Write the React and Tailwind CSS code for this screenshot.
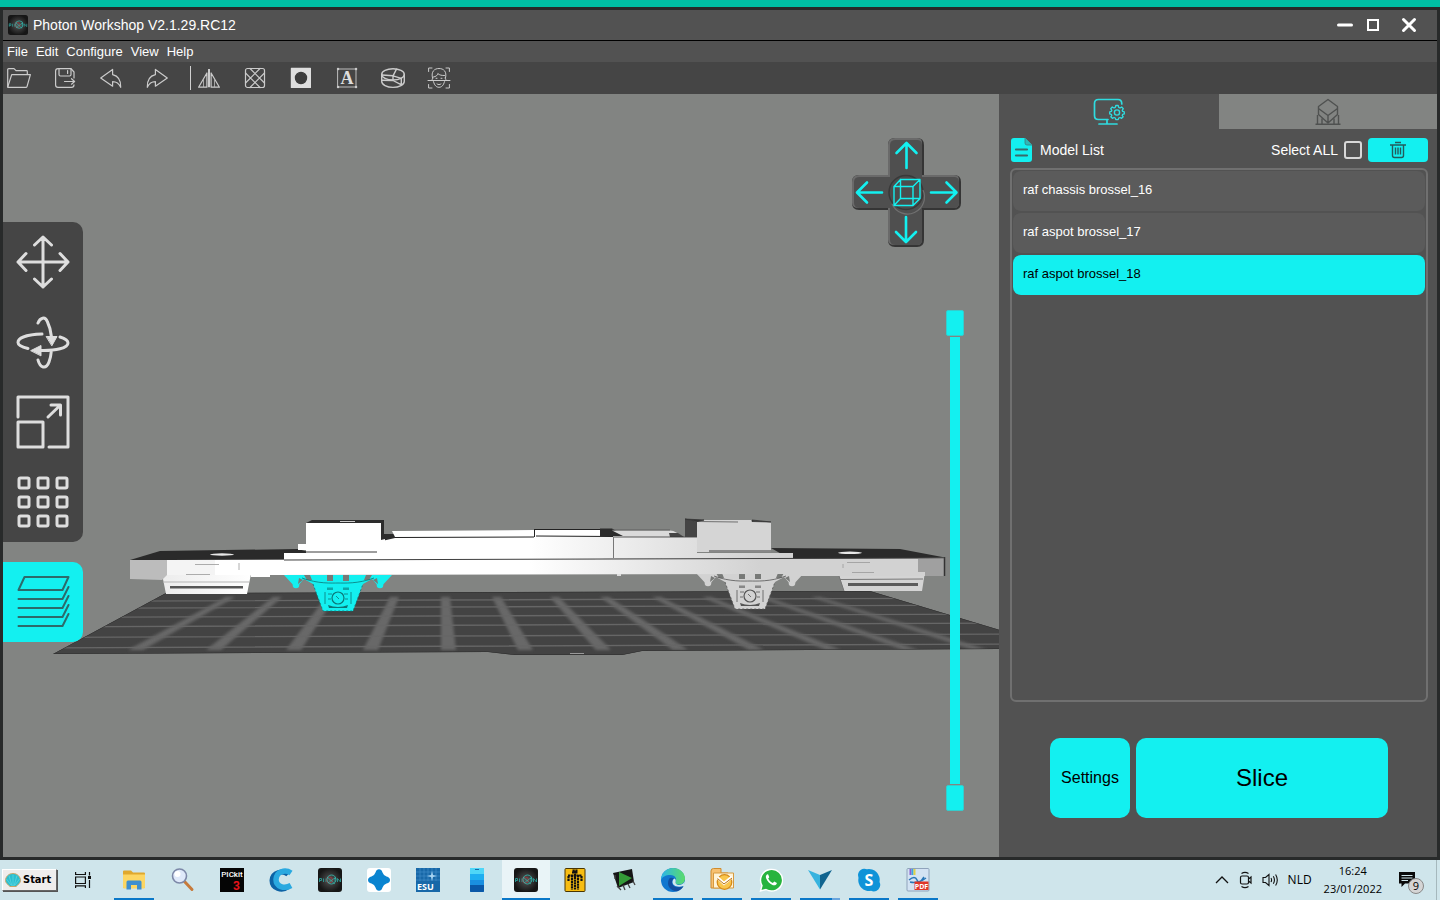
import { useState } from "react";

const CYAN = "#13f0f0";

const ToolSvg = ({ children }) => (
  <svg
    viewBox="0 0 24 24"
    className="w-6 h-6"
    fill="none"
    stroke="#cbcbcb"
    strokeWidth="1.2"
    strokeLinejoin="round"
    strokeLinecap="round"
  >
    {children}
  </svg>
);

const fileTools = [
  {
    label: "Open",
    icon: (
      <ToolSvg>
        <path d="M.7 21V3.6Q.7 2.6 1.7 2.6H7L9 4.6H19.5Q20.3 4.6 20.3 5.4V8" />
        <path d="M.7 21 4.7 8.6H23.4L20 20.6Q19.7 21.4 19 21.4H1Z" />
      </ToolSvg>
    ),
  },
  {
    label: "Save",
    icon: (
      <ToolSvg>
        <path d="M21 12V6L18 2.6H5Q2.6 2.6 2.6 5V19Q2.6 21.4 5 21.4H18.5Q21 21.4 21 18.8" />
        <path d="M6 2.8V8.5Q6 10 7.5 10H16.5Q18 10 18 8.5V2.8M14.6 4.5V7.5M11.5 15.5H21.5M18.5 12.7 21.6 15.5 18.5 18.2" />
      </ToolSvg>
    ),
  },
  {
    label: "Undo",
    icon: (
      <ToolSvg>
        <path d="M1.7 12 13.6 3.4V8.6C18.8 9.8 22 14.5 21.7 21.3 20 17.4 17.5 15.6 13.6 15.6V20.2Z" />
      </ToolSvg>
    ),
  },
  {
    label: "Redo",
    icon: (
      <ToolSvg>
        <path d="M22.3 12 10.4 3.4V8.6C5.2 9.8 2 14.5 2.3 21.3 4 17.4 6.5 15.6 10.4 15.6V20.2Z" />
      </ToolSvg>
    ),
  },
];

const modelTools = [
  {
    label: "Mirror",
    icon: (
      <ToolSvg>
        <path d="M1.6 21.2 9.9 7V21.2ZM22.4 21.2 14.1 7V21.2Z" />
        <path d="M6.5 20.5V14M17.5 20.5V14" strokeWidth=".7" />
        <path d="M12 3V21.2" strokeWidth="2" strokeLinecap="butt" />
      </ToolSvg>
    ),
  },
  {
    label: "Hollow",
    icon: (
      <ToolSvg>
        <rect x="2.5" y="2.5" width="19" height="19" rx="2" />
        <path d="M7 2.5 21.5 17M2.5 7 17 21.5M17 2.5 2.5 17M21.5 7 7 21.5" />
      </ToolSvg>
    ),
  },
  {
    label: "Punch",
    icon: (
      <ToolSvg>
        <rect x="2.4" y="2.4" width="19" height="19" fill="#dedede" stroke="#dedede" />
        <circle cx="12" cy="12" r="5.6" fill="#3c3c3c" stroke="#3c3c3c" />
      </ToolSvg>
    ),
  },
  {
    label: "Text",
    icon: (
      <ToolSvg>
        <rect x="3" y="3" width="18" height="18" strokeWidth=".9" />
        <path d="M3 3h.1M21 3h.1M3 21h.1M21 21h.1" strokeWidth="2.4" />
        <text
          x="12"
          y="18"
          textAnchor="middle"
          fill="#dedede"
          stroke="none"
          fontSize="18"
          fontWeight="bold"
          fontFamily="Liberation Serif, serif"
        >
          A
        </text>
      </ToolSvg>
    ),
  },
  {
    label: "Split",
    icon: (
      <ToolSvg>
        <g strokeWidth="1.4">
          <ellipse cx="12" cy="8.4" rx="11.3" ry="5.6" />
          <path d="M.7 8.4V15.2C.7 18.7 5.8 21.4 12 21.4S23.3 18.7 23.3 15.2V8.4" />
          <path d="M.8 9 12 9.8 15.5 3.2M12 9.8 20.3 12.3V18.8M12 9.800V14.500M.8 14.200 12 14.500 20 18.600" />
        </g>
      </ToolSvg>
    ),
  },
  {
    label: "Lithophane",
    icon: (
      <ToolSvg>
        <g strokeWidth="1">
          <path d="M1.6 5.5V2H5M19 2H22.4V5.5M22.4 18.5V22H19M5 22H1.6V18.5" />
          <path d="M1 14.5H23" />
          <path d="M5.5 12C3.8 5.5 7.5 2.5 12 2.5S20.2 5.5 18.5 12M6 12C4.5 12 5 15 6.5 15.5 7.5 19.5 9.5 21.3 12 21.3S16.5 19.5 17.5 15.5C19 15 19.5 12 18 12M6.5 11C9 10.5 10.5 9.5 10.8 7.5 12.5 9.3 15 9.5 17.5 9.5M9 12.3H10M14 12.3H15M10 18C11 18.8 13 18.8 14 18" />
        </g>
      </ToolSvg>
    ),
  },
];

const cells = [8, 27, 46];

const sideTools = [
  {
    label: "Move",
    icon: (
      <path d="M27 2V52M2 27H52M18.5 10 27 2 35.5 10M18.5 44 27 52 35.5 44M10 18.5 2 27 10 35.5M44 18.5 52 27 44 35.5" />
    ),
  },
  {
    label: "Rotate",
    icon: (
      <>
        <path d="M22 8C24 3 29 .5 31.5 7 34 12 35 17 35.5 22M22 45C24 53 30 55 33 47 34.5 43 35 40 35.2 37" />
        <path d="M26 19C12 19.5 2 22.5 2 27.5 2 30 6 32 12 33.5M44 22C49 23.5 52 25.5 52 28 52 33 40 36 24 35.5" />
        <path d="M30.5 21.5H41L36 30.5ZM15 35.5 25 30.5V40.5Z" fill="#dedede" strokeWidth="1" />
      </>
    ),
  },
  {
    label: "Scale",
    icon: (
      <>
        <path d="M2 22V2H52V52H33" />
        <path d="M2 27H27V52H2ZM32 22 44 10.5M35 10H44.5V20" />
      </>
    ),
  },
  {
    label: "Array",
    icon: cells.map((cy) =>
      cells.map((cx) => (
        <rect key={`${cx}-${cy}`} x={cx - 5} y={cy - 5} width="10" height="10" rx="1.5" />
      ))
    ),
  },
];

// x of each grid stripe at the back and at the front of the plate
const stripes = [
  [230, 135],
  [277, 213],
  [330, 293],
  [394, 370],
  [445, 448],
  [496, 525],
  [554, 603],
  [604, 680],
  [656, 756],
  [706, 833],
  [762, 910],
  [815, 980],
];

const Bogie = ({ x, y, color, dark }) => (
  <g transform={`translate(${x} ${y})`}>
    <path d="M-54 0H54L42 13 34 4 25 9 15 36H-15L-25 9-34 4-42 13Z" fill={color} />
    <circle cx="-42" cy="10" r="3.3" fill={color} />
    <circle cx="42" cy="10" r="3.3" fill={color} />
    <path
      d="M-11 0H-5V6H-11ZM5 0H11V6H5ZM-34 0H-28L-26 5H-31ZM28 0H34L31 5H26ZM-39 3-35 5-40 9ZM39 3 35 5 40 9Z"
      fill="#777977"
    />
    <path
      d="M-36 3C-20 9-6 8 0 8S20 9 36 3M-13 17V29M13 17V29M-10 19H-6M6 19H10M-10 24H-7M7 24H10"
      stroke={dark}
      strokeWidth=".8"
      fill="none"
    />
    <path d="M-11 12.500H-5V15H-11ZM5 12.500H11V15H5Z" fill={dark} opacity=".6" />
    <circle cx="0" cy="23" r="6" stroke={dark} strokeWidth="1.2" fill="none" />
    <path d="M-2 21 1 24" stroke={dark} strokeWidth=".8" />
    <path d="M-10 30Q0 34 10 30L9 33H-9Z" fill={dark} />
    <path d="M-25 9-15 36H15L25 9" stroke={dark} strokeWidth=".8" strokeDasharray="2 2" fill="none" />
  </g>
);

const Scene = () => (
  <svg
    viewBox="3 94 996 763"
    preserveAspectRatio="xMidYMid slice"
    className="absolute inset-0 w-full h-full"
    aria-hidden="true"
  >
    <defs>
      <linearGradient id="beam" gradientUnits="userSpaceOnUse" x1="530" y1="0" x2="760" y2="0">
        <stop offset="0" stopColor="#ffffff" />
        <stop offset="1" stopColor="#d2d2d2" />
      </linearGradient>
      <linearGradient id="bumper" x1="0" y1="0" x2="1" y2="0">
        <stop offset="0" stopColor="#ececec" />
        <stop offset="1" stopColor="#ffffff" />
      </linearGradient>
      <clipPath id="bed">
        <path d="M53 654 166 593 870 591 1010 633V649L642 651 622 655H515L488 652Z" />
      </clipPath>
      <filter id="soft" x="-20%" y="-20%" width="140%" height="140%">
        <feGaussianBlur stdDeviation="1.6" />
      </filter>
    </defs>

    {/* build plate */}
    <g clipPath="url(#bed)">
      <rect x="40" y="588" width="980" height="72" fill="#434343" />
      <g filter="url(#soft)">
        {stripes.map(([top, bottom]) => (
          <path
            key={top}
            d={`M${top - 4} 597H${top + 5}L${bottom + 8} 650H${bottom - 7}Z`}
            fill="#686868"
          />
        ))}
      </g>
      <path
        d="M0 601.5 1010 598M0 608.5 1010 605M0 617.5 1010 614M0 627 1010 623M0 637.5 1010 634M0 648 1010 644"
        stroke="#666"
        strokeWidth="1.3"
      />
      <path d="M53 654 166 593 870 591 1010 633V649L642 651 622 655H515L488 652Z" fill="none" stroke="#2d2d2d" />
      <path d="M570 653.5h14" stroke="#999" />
    </g>

    {/* under-frame */}
    <Bogie x={338} y={575} color={CYAN} dark="#0b7777" />
    <Bogie x={750} y={573} color="#d2d2d2" dark="#555" />
    <path d="M162 574H251L247 594H166Z" fill="url(#bumper)" />
    <path d="M170 586H243V588.5H170Z" fill="#555" />
    <path d="M163 582H249" stroke="#b5b5b5" />
    <path d="M838 572H925L922 591H844Z" fill="#d4d4d4" />
    <path d="M848 583H918V586H848Z" fill="#5c5c5c" />
    <path d="M840 579.5 923 579M838 573 844 591" stroke="#777" />

    {/* deck */}
    <path d="M130 560 160 551 298 549 312 553 284 560.5Z" fill="#2a2a2a" />
    <ellipse cx="222" cy="554.5" rx="12" ry="1.2" fill="#e8e8e8" />
    <path d="M771 548 900 549 945 557.5 792 560Z" fill="#2a2a2a" />
    <ellipse cx="850" cy="552.8" rx="12" ry="1.2" fill="#e8e8e8" />
    <path d="M130 560H167V575L162 580 130 579Z" fill="#bcbcbc" />
    <path d="M167 560 945 558V574L925 576H800V574L270 575V577H251V575H167Z" fill="url(#beam)" />
    <path d="M167 560H215V575H167Z" fill="#f4f4f4" />
    <path d="M918 559H944V576H925V572H918Z" fill="#a0a0a0" />
    <path d="M944.5 557V576" stroke="#333" strokeWidth="1.5" />
    <path d="M195 564.5H219M186 574.5H210M239 563V570M847 562.5H870M852 572.5H874M843 564V568" stroke="#999" strokeWidth=".8" />
    <path d="M617 574H621V576H617Z" fill="#ddd" />
    <path d="M284 553H793V560H284Z" fill="url(#beam)" />
    <path d="M377 553V541L395 536H613L697 537V553Z" fill="url(#beam)" />

    {/* body */}
    <path d="M306 523 312 520H384V534H395V538L382 541H306Z" fill="#2c2c2c" />
    <path d="M298 544H306V523H381V540L385 539V553H306V550H298Z" fill="#fff" />
    <path d="M340 521.5H355" stroke="#ccc" />
    <path d="M392 531 534 530H600V536L395 537Z" fill="#fff" />
    <path d="M395 537.5 534 537M534 529.5H600M534.5 530V537M536 536 613 536.5" stroke="#222" />
    <path d="M600 528.5H612L625 536H600Z" fill="#2c2c2c" />
    <path d="M612 530.5H670Q677 531 681 537H625Z" fill="#dadada" />
    <path d="M612 530H670" stroke="#555" strokeWidth=".8" />
    <path d="M669 533H678L684 537H670Z" fill="#444" />
    <path d="M613 537H697" stroke="#333" strokeWidth=".8" />
    <path d="M613.5 537V558" stroke="#777" />
    <path d="M685 519 698 522V537H685Z" fill="#444" />
    <path d="M697 521.5 705 520H752L771 522V552H697Z" fill="#d5d5d5" />
    <path d="M697 521.5 738 522" stroke="#555" strokeWidth=".8" />
    <path d="M685 519 697 521.5 704 520ZM752 520 771 522 752 521.5Z" fill="#333" stroke="#333" strokeWidth=".8" />
    <path d="M709 551H771M284 560 606 559 945 558M306 552H377" stroke="#3d3d3d" strokeWidth="1" />
  </svg>
);

const ViewButton = ({ label, d, className }) => (
  <button aria-label={label} className={className}>
    <svg
      viewBox="0 0 36 36"
      className="w-9 h-9"
      stroke={CYAN}
      strokeWidth="2.6"
      strokeLinecap="round"
      strokeLinejoin="round"
      fill="none"
    >
      {d}
    </svg>
  </button>
);

const ViewCross = () => (
  <div className="relative w-[110px] h-[110px]">
    <svg viewBox="0 0 110 110" className="absolute inset-0 w-full h-full" aria-hidden="true">
      <path
        d="M43 0H65Q72 0 72 7V37H102Q109 37 109 44V65Q109 72 102 72H72V102Q72 109 65 109H43Q36 109 36 102V72H7Q0 72 0 65V44Q0 37 7 37H36V7Q36 0 43 0Z"
        fill="#353535"
      />
      <path
        d="M43 0H65Q70 0 70 5V37H102Q107 37 107 42V65Q107 70 102 70H70V102Q70 107 65 107H43Q36 107 36 102V70H7Q0 70 0 65V44Q0 37 7 37H36V7Q36 0 43 0Z"
        fill="#6a6a6a"
      />
      <path
        d="M44 2H65Q70 2 70 7V39H102Q107 39 107 44V65Q107 70 102 70H70V102Q70 107 65 107H44Q38 107 38 102V70H8Q2 70 2 65V44Q2 39 8 39H38V7Q38 2 44 2Z"
        fill="#4f4f4f"
      />
      <circle cx="54" cy="54.5" r="17" fill="#4c4c4c" stroke="#393939" strokeWidth="1.5" />
      <path d="M40 66A17 17 0 0 0 71 52" stroke="#707070" strokeWidth="1.2" fill="none" />
    </svg>
    <div className="relative w-[108px] h-[108px] grid grid-cols-3 grid-rows-3">
      <ViewButton label="Top view" className="col-start-2" d={<path d="M18.500 30V6M8.500 15 18.500 5 28.500 15" />} />
      <ViewButton label="Left view" className="col-start-1 row-start-2" d={<path d="M30 18.500H6M15 8.500 5 18.500 15 28.500" />} />
      <ViewButton
        label="Perspective"
        className="col-start-2 row-start-2"
        d={
          <path
            d="M6 12.500H25V31.500H6ZM12.500 5.500H32V24.500H12.500ZM6 12.500 12.500 5.500M25 12.500 32 5.500M25 31.500 32 24.500M6 31.500 12.500 24.500"
            strokeWidth="1.4"
          />
        }
      />
      <ViewButton label="Right view" className="col-start-3 row-start-2" d={<path d="M7 18.500H32M22.500 8.500 32.500 18.500 22.500 28.500" />} />
      <ViewButton label="Bottom view" className="col-start-2 row-start-3" d={<path d="M18 7V31M8 22 18 32 28 22" />} />
    </div>
  </div>
);

const rangeClass =
  "absolute inset-0 w-[18px] h-full m-0 appearance-none bg-transparent pointer-events-none [writing-mode:vertical-lr] [direction:rtl] [&::-webkit-slider-thumb]:appearance-none [&::-webkit-slider-thumb]:pointer-events-auto [&::-webkit-slider-thumb]:w-[18px] [&::-webkit-slider-thumb]:h-[26px] [&::-webkit-slider-thumb]:rounded-[2px] [&::-webkit-slider-thumb]:border [&::-webkit-slider-thumb]:border-[#35cccc] [&::-webkit-slider-thumb]:bg-[#13f0f0]";

const LayerSlider = () => {
  const [top, setTop] = useState(100);
  const [bottom, setBottom] = useState(0);

  return (
    <div className="relative w-[18px] h-[501px] flex justify-center py-[27px]">
      <div className="w-[10px] bg-[#13f0f0]"></div>
      <input
        type="range"
        aria-label="Top layer"
        className={rangeClass}
        value={top}
        onChange={(e) => setTop(Number(e.target.value))}
      />
      <input
        type="range"
        aria-label="Bottom layer"
        className={rangeClass}
        value={bottom}
        onChange={(e) => setBottom(Number(e.target.value))}
      />
    </div>
  );
};

const PhotonIcon = ({ size }) => (
  <svg viewBox="0 0 24 24" className={size}>
    <defs>
      <radialGradient id="photon">
        <stop offset="0" stopColor="#565656" />
        <stop offset="1" stopColor="#161616" />
      </radialGradient>
    </defs>
    <rect width="24" height="24" rx="3" fill="url(#photon)" />
    <path
      d="M1.5 14V10.5H3.5V12.500H1.500M5.500 10.500V14M8 10.500V14M16 10.500H18M17 10.500V14M19.500 14V10.500L22.500 14V10.500"
      stroke="#2a9c96"
      strokeWidth=".9"
      fill="none"
    />
    <circle cx="11.5" cy="12" r="3" stroke="#b0333a" strokeWidth=".8" fill="none" />
    <ellipse cx="13.5" cy="11.5" rx="4.5" ry="4.500" stroke="#35bfb4" strokeWidth=".8" fill="none" />
    <path d="M9 9 17 16M10 15 18 9" stroke="#35bfb4" strokeWidth=".6" />
  </svg>
);

const Icon24 = ({ children }) => (
  <svg viewBox="0 0 24 24" className="w-6 h-6">
    {children}
  </svg>
);

const taskbarApps = [
  {
    name: "File Explorer",
    running: true,
    icon: (
      <Icon24>
        <path d="M1 3.5Q1 2.5 2 2.5H9L11 4.5H22Q23 4.5 23 5.5V20H1Z" fill="#e0a82e" />
        <path d="M1 6.5H23V19.5Q23 20.5 22 20.5H2Q1 20.5 1 19.5Z" fill="#fdd663" />
        <path d="M4.5 21.5V14Q4.5 12.5 6 12.5H18Q19.5 12.5 19.5 14V21.5H15V17H9V21.5Z" fill="#3f8fd0" />
      </Icon24>
    ),
  },
  {
    name: "Search",
    icon: (
      <Icon24>
        <path d="M13 13 21 21.5" stroke="#c77a3b" strokeWidth="3" strokeLinecap="round" />
        <circle cx="8.5" cy="8" r="7" fill="#dfe9fa" stroke="#7d88a8" strokeWidth="1.6" />
        <circle cx="6.5" cy="6" r="3" fill="#fff" />
      </Icon24>
    ),
  },
  {
    name: "PICkit 3",
    icon: (
      <Icon24>
        <rect width="24" height="24" fill="#050505" />
        <text x="12" y="8.5" fill="#fff" fontSize="8" fontFamily="Roboto, sans-serif" fontWeight="500" textAnchor="middle">
          PICkit
        </text>
        <text x="16.5" y="22" fill="#e8131b" fontSize="12" fontFamily="Roboto, sans-serif" fontWeight="bold" textAnchor="middle">
          3
        </text>
      </Icon24>
    ),
  },
  {
    name: "Cura",
    icon: (
      <Icon24>
        <path d="M19 6.5C14 2 3.500 4 3 12.5 3 20.500 13 23.500 18.500 19" stroke="#0d63a5" strokeWidth="5" fill="none" />
        <path d="M22 5C16 1 7.500 3.500 7 11.500 7 18.500 15 21.500 22 17.500" stroke="#2aa9e0" strokeWidth="5.500" fill="none" />
      </Icon24>
    ),
  },
  { name: "Photon Workshop", icon: <PhotonIcon size="w-6 h-6" /> },
  {
    name: "Sensor",
    icon: (
      <Icon24>
        <rect width="24" height="24" rx="3" fill="#fff" />
        <path
          d="M12 1.200Q14.500 1.200 15.500 4.500 16.500 7.500 19.500 8.500 23 9.500 23 12T19.500 15.500Q16.500 16.500 15.500 19.500 14.500 22.800 12 22.800T8.500 19.500Q7.500 16.500 4.500 15.500 1 14.500 1 12T4.500 8.500Q7.500 7.500 8.500 4.500 9.500 1.200 12 1.200Z"
          fill="#0a84d0"
        />
      </Icon24>
    ),
  },
  {
    name: "ESU",
    icon: (
      <Icon24>
        <rect width="24" height="24" fill="#1868a8" />
        <path d="M0 4H24M0 8H24M0 12H24M4 0V13M8 0V13M12 0V13M16 0V13M20 0V13" stroke="#3f8cc8" strokeWidth=".7" />
        <path d="M16 3 17 7 21 8 17 9 16 13 15 9 11 8 15 7Z" fill="#a9d4f2" />
        <text x="1" y="22" fill="#fff" fontSize="9" fontWeight="bold" fontFamily="Open Sans, sans-serif">
          ESU
        </text>
      </Icon24>
    ),
  },
  {
    name: "Your Phone",
    icon: (
      <Icon24>
        <rect x="5" width="14" height="24" rx="1" fill="#1a8fe0" />
        <rect x="5" width="14" height="6" fill="#4fd6f7" />
        <rect x="5" y="6" width="14" height="6" fill="#1eaef0" />
        <path d="M5 17H19V23Q19 24 18 24H6Q5 24 5 23Z" fill="#0a58a8" />
        <path d="M10 1.5H14" stroke="#1669a8" />
      </Icon24>
    ),
  },
  { name: "Photon Workshop V2", running: true, active: true, icon: <PhotonIcon size="w-6 h-6" /> },
  {
    name: "Crowd",
    icon: (
      <Icon24>
        <rect x="2" y=".5" width="20" height="23" rx="1" fill="#f7bd12" stroke="#4a3500" />
        <path
          d="M9 4.5H15M9.5 2.5H14.5M5 7.5H19M5.5 8V13M18.5 8V13M9 7V21.5M12 3V21.5M15 7V21.5"
          stroke="#111"
          strokeWidth="2.2"
          strokeDasharray="2.300 .5"
        />
      </Icon24>
    ),
  },
  {
    name: "Circuit",
    icon: (
      <Icon24>
        <path d="M1 5 20 1 22 14 6 20Z" fill="#161616" />
        <path d="M7 4 20 10 7 18Z" fill="#349a37" />
        <path d="M3 7V11M5 18 9 22M11 17 13 22M16 16 18 20M21 13 23 17" stroke="#444" strokeWidth="1.3" />
      </Icon24>
    ),
  },
  {
    name: "Edge",
    running: true,
    icon: (
      <Icon24>
        <defs>
          <linearGradient id="edgeTop" x1="0" y1="0" x2="1" y2="0">
            <stop offset="0" stopColor="#2bb5ea" />
            <stop offset="1" stopColor="#5bdc6a" />
          </linearGradient>
        </defs>
        <circle cx="12" cy="12" r="12" fill="#1177cf" />
        <path d="M0 12C0 5 5.5 0 12 0S24 5 24 10.5 19 17 16 16.5 14.5 14 15 12.5 14.5 7 9.5 7 1 9 0 12Z" fill="url(#edgeTop)" />
        <path d="M8 11C5 17 9 23 16 23.3 19 22.5 21.5 20.5 22.5 18 16 21 11 18.5 11 14 11 12 12 11 13 10.5 11.5 9.5 9 9.5 8 11Z" fill="#124fa0" />
        <path d="M13.5 10.5C15.5 11.5 14.5 13.5 14.5 15 15.5 18 22 18 24 13L23.5 17.5 22.5 18C16 20 11.5 17.5 11.5 14 11.5 12 12.5 11 13.5 10.5Z" fill="#d2e8ee" />
      </Icon24>
    ),
  },
  {
    name: "Outlook",
    running: true,
    icon: (
      <Icon24>
        <path d="M1 3Q1 .5 3.5 .5H11V5H18V20H1Z" fill="#f7c172" stroke="#cf8b2d" />
        <path d="M3.5 5H23.5V20H3.5Z" fill="#fff3d6" stroke="#d79a3f" />
        <circle cx="14.500" cy="14" r="7.3" fill="#f9c64d" stroke="#d58a18" strokeWidth="1.3" />
        <path d="M7.500 9.500 14 15.500 22 9" stroke="#fff" strokeWidth="3" fill="none" />
        <path d="M7.500 10.500 14 16 22 10" stroke="#b86f10" strokeWidth="1" fill="none" />
      </Icon24>
    ),
  },
  {
    name: "WhatsApp",
    running: true,
    icon: (
      <Icon24>
        <path d="M1.5 23 3 17.5A11 10.8 0 1 1 7 21.5Z" fill="#27b43e" stroke="#fff" strokeWidth="1.4" />
        <path d="M8.3 6.3C7 7 6.5 8.6 7.1 10.3 8.4 13.6 10.8 16 14 17.2 15.9 17.8 17.6 16.8 17.9 15L15.2 13.5 13.9 15C11.7 14.1 10.2 12.5 9.2 10.5L10.3 9.2 9.2 6.5Z" fill="#fff" />
      </Icon24>
    ),
  },
  {
    name: "Vectorworks",
    running: true,
    partial: true,
    icon: (
      <Icon24>
        <path d="M0 2 12 7V21.5Z" fill="#36b3df" />
        <path d="M24 2 12 7V21.5Z" fill="#11648f" />
      </Icon24>
    ),
  },
  {
    name: "Skype",
    running: true,
    icon: (
      <Icon24>
        <path d="M1 7A6.5 6.5 0 0 1 10 1.2 10.8 10.8 0 0 1 22.5 14 6.5 6.5 0 0 1 14 22.8 10.8 10.8 0 0 1 1.5 10Z" fill="#0f93d8" />
        <text x="12" y="17.5" textAnchor="middle" fill="#fff" fontSize="16" fontWeight="bold" fontFamily="Open Sans, sans-serif">
          S
        </text>
      </Icon24>
    ),
  },
  {
    name: "PDF Creator",
    running: true,
    icon: (
      <Icon24>
        <rect x="1" y=".5" width="22" height="22.5" rx="1" fill="#d3e3f3" stroke="#8fa3bb" />
        <path d="M4.5 1V7" stroke="#8b5fd0" strokeWidth="2" />
        <path d="M6.5 1V7" stroke="#3aa7e0" strokeWidth="2" />
        <path d="M8.5 1V7" stroke="#e0d048" strokeWidth="2" />
        <path d="M3 12Q9 7 11 12T18 9M4 14Q12 16 20 10" stroke="#2876b8" strokeWidth="1.5" fill="none" />
        <rect x="8.5" y="13.5" width="14" height="8.5" fill="#e03528" />
        <text x="15.5" y="20.5" textAnchor="middle" fill="#fff" fontSize="7" fontWeight="bold" fontFamily="Open Sans, sans-serif">
          PDF
        </text>
      </Icon24>
    ),
  },
];

const TaskbarApp = ({ app }) => (
  <button
    aria-label={app.name}
    className={`relative w-12 h-10 flex items-center justify-center ${app.active ? "bg-[#e9f4f7]" : ""}`}
  >
    {app.icon}
    {app.running && (
      <span
        className={`absolute bottom-0 h-[2px] flex bg-[#0b78c8] ${
          app.active ? "inset-x-0" : "inset-x-1"
        }`}
      >
        {app.partial && <span className="ml-auto w-2 bg-[#6aa5dd]"></span>}
      </span>
    )}
  </button>
);

const Taskbar = () => (
  <footer className="h-10 flex items-center bg-[#cfe5eb] text-black font-['Open_Sans',sans-serif]">
    <button className="ml-[2px] w-[55px] h-[22px] px-[2px] flex items-center gap-[2px] bg-[#efedec] border border-t-white border-l-white border-r-[#666] border-b-[#666] shadow-[1px_1px_0_#555] text-[11px] font-bold font-['DejaVu_Sans_Condensed','DejaVu_Sans',sans-serif]">
      <svg viewBox="0 0 16 16" className="w-4 h-4 shrink-0">
        <path d="M8 1.5C12.5 1.5 15.5 5 15.5 8.5 15.5 11 13 12.5 11 14.5H5C3 12.5 .5 11 .5 8.5 .5 5 3.5 1.5 8 1.5Z" fill="#29bfd0" stroke="#c9a56a" />
        <path d="M8 14V2.5M7 14 4 3.5M9 14 12 3.5M6 13 1.5 7M10 13 14.5 7" stroke="#6fdbe3" strokeWidth=".6" />
      </svg>
      Start
    </button>
    <button aria-label="Task view" className="ml-[2px] mr-[3px] w-12 h-10 flex items-center justify-center">
      <svg viewBox="0 0 16 16" className="w-4 h-4" stroke="#111" strokeWidth="1.2" fill="none">
        <path d="M.6 0V2.5H10.4V0M.6 5H10.4V11.5H.6ZM.6 16V13.8H10.4V16M14.5 0V3.5M14.5 8V16" />
        <path d="M14.5 4V7" strokeWidth="3" />
      </svg>
    </button>
    <div className="flex gap-px">
      {taskbarApps.map((app) => (
        <TaskbarApp key={app.name} app={app} />
      ))}
    </div>

    <div className="ml-auto flex items-center h-full">
      <div className="flex items-center gap-2">
        <svg viewBox="0 0 16 16" className="w-4 h-4" stroke="#111" strokeWidth="1.3" fill="none">
          <path d="M2 11 8 5 14 11" />
        </svg>
        <svg viewBox="0 0 16 18" className="w-4 h-[18px]" stroke="#111" strokeWidth="1.2" fill="none">
          <path d="M3.5 2.5Q7 .3 10.5 2.5M3.5 15.5Q7 17.7 10.5 15.5M4 5H9Q10.5 5 10.5 6.5V11.5Q10.5 13 9 13H4Q2.5 13 2.5 11.5V6.5Q2.5 5 4 5ZM10.5 8 13 6V12L10.5 10" />
        </svg>
        <svg viewBox="0 0 18 16" className="w-[18px] h-4" stroke="#111" strokeWidth="1.1" fill="none">
          <path d="M1 5.5H3.5L7 2.5V13.5L3.5 10.5H1ZM9 6Q10.2 8 9 10M11.3 4.3Q13.6 8 11.3 11.7M13.6 2.5Q17 8 13.6 13.5" />
        </svg>
        <span className="text-xs">NLD</span>
      </div>
      <div className="ml-3 text-center text-[11px] leading-[18px]">
        <div>16:24</div>
        <div>23/01/2022</div>
      </div>
      <button aria-label="Notifications" className="ml-4 mr-3 w-[26px] h-7 relative">
        <svg viewBox="0 0 18 18" className="w-[18px] h-[18px] absolute left-0 top-1">
          <path d="M1 2H17V13.5H7L3.5 17V13.5H1Z" fill="#0a0a0a" />
          <path d="M3.5 5.5H14.5M3.5 8H14.5M3.5 10.5H10" stroke="#cfe5eb" />
        </svg>
        <span className="absolute right-0 bottom-0 w-4 h-4 rounded-full bg-[#d5d5d5] border border-[#888] text-[11px] leading-[14px] text-center">
          9
        </span>
      </button>
      <div className="h-full w-1 border-l border-[#a5b8bd]"></div>
    </div>
  </footer>
);

const SupportIcon = () => (
  <svg viewBox="0 0 26 28" className="w-[26px] h-7" fill="none" stroke="#4f5150" strokeWidth="1.4" strokeLinejoin="round">
    <path d="M13 1.500 22.500 8.500V16.500L13 25 3.500 16.500V8.500ZM3.500 10.500 13 17.500 22.500 10.500M13 17.500V25" />
    <path d="M2.500 17V26M7 20.500V26M19 20.500V26M23.500 17V26M.5 26.300H9M17 26.300H25.500M9 26.300H17" />
  </svg>
);

const MonitorIcon = () => (
  <svg viewBox="0 0 32 28" className="w-8 h-7" fill="none" stroke="#2fdce0" strokeWidth="1.7" strokeLinecap="round">
    <path d="M15 21.5H5.5Q1.500 21.5 1.500 17.5V5.500Q1.500 1.500 5.500 1.500H25Q28.800 1.500 28.800 6M6 26H24M14 22V26" />
    <circle cx="24" cy="14.5" r="2.6" strokeWidth="1.4" />
    <path
      d="M22.8 7.5H25.2L25.7 9.4 27 10 28.7 9 30.3 10.7 29.2 12.4 29.7 13.4 31.3 13.8V15.9L29.7 16.3 29.2 17.4 30.2 18.8 28.6 20.3 27 19.5 25.7 20 25.2 21.6H22.8L22.3 20 21 19.5 19.4 20.3 17.8 18.8 18.8 17.4 18.3 16.3 16.7 15.9V13.8L18.3 13.4 18.8 12.4 17.7 10.7 19.3 9 21 10 22.3 9.4Z"
      strokeWidth="1.3"
      strokeLinejoin="round"
    />
  </svg>
);

const models = ["raf chassis brossel_16", "raf aspot brossel_17", "raf aspot brossel_18"];

const ModelPanel = () => {
  const [selected, setSelected] = useState(2);
  const [all, setAll] = useState(false);

  return (
    <aside className="w-[438px] shrink-0 flex flex-col bg-[#525252]">
      <div className="flex h-[35px]">
        <button aria-label="Print settings" className="w-[220px] flex items-center justify-center">
          <MonitorIcon />
        </button>
        <button aria-label="Supports" className="flex-1 flex items-center justify-center bg-[#828482]">
          <SupportIcon />
        </button>
      </div>

      <div className="mt-[9px] ml-[12px] mr-[9px] h-6 flex items-center text-sm text-white">
        <svg viewBox="0 0 21 24" className="w-[21px] h-6 mr-2">
          <path d="M3 0H14L21 7V21Q21 24 18 24H3Q0 24 0 21V3Q0 0 3 0Z" fill={CYAN} />
          <path d="M14 0V5Q14 7 16 7H21" fill="#2fb8b8" stroke="#3e7c7c" strokeWidth=".8" />
          <path d="M5 11.5H16M5 17.500H16" stroke="#3a6a6a" strokeWidth="2.2" strokeLinecap="round" />
        </svg>
        <h2>Model List</h2>
        <label htmlFor="select-all" className="ml-auto">
          Select ALL
        </label>
        <input
          id="select-all"
          type="checkbox"
          checked={all}
          onChange={(e) => setAll(e.target.checked)}
          className="ml-1.5 w-[18px] h-[18px] appearance-none border-2 border-[#d8d8d8] rounded-[3px] checked:bg-[#13f0f0]"
        />
        <button
          aria-label="Delete selected"
          className="ml-1.5 w-[60px] h-6 rounded bg-[#13f0f0] flex items-center justify-center"
        >
          <svg viewBox="0 0 16 18" className="w-4 h-[18px]" fill="none" stroke="#245b5b" strokeWidth="1.4">
            <path d="M5 1.5H11M0 4H16M2.5 4V14.5Q2.5 16.5 4.5 16.5H11.5Q13.5 16.500 13.500 14.500V4" />
            <path d="M5.500 6.500V13.500M8 6.500V13.500M10.500 6.500V13.500" />
          </svg>
        </button>
      </div>

      <ul className="mt-1.5 ml-[11px] mr-[9px] flex-1 p-px flex flex-col gap-[2px] border-2 border-[#707070] rounded-md">
        {models.map((name, idx) => (
          <li key={name}>
            <button
              onClick={() => setSelected(idx)}
              className={`block w-full h-10 px-[10px] pb-[2px] rounded-lg text-left text-[13px] ${
                selected === idx ? "bg-[#13f0f0] text-black" : "bg-[#5b5b5b] text-white"
              }`}
            >
              {name}
            </button>
          </li>
        ))}
      </ul>

      <div className="mt-9 mb-[39px] ml-[51px] mr-[49px] flex gap-1.5 text-black">
        <button className="w-20 h-20 rounded-[10px] bg-[#13f0f0] text-base">Settings</button>
        <button className="flex-1 h-20 rounded-[10px] bg-[#13f0f0] text-2xl">Slice</button>
      </div>
    </aside>
  );
};

const App = () => {
  return (
    <div className="min-h-screen flex flex-col bg-[#282a2a] font-['Liberation_Sans',Arial,sans-serif]">
      <div className="h-[7px] bg-[#00bfa5]"></div>
      <div className="flex-1 flex flex-col p-[3px]">
        <header className="h-[30px] pl-[5px] pr-5 flex items-center bg-[#525252] text-sm text-white">
          <PhotonIcon size="w-5 h-5" />
          <h1 className="ml-[5px]">Photon Workshop V2.1.29.RC12</h1>
          <div className="ml-auto flex items-center gap-[14px]">
            <button aria-label="Minimize">
              <svg viewBox="0 0 16 16" className="w-4 h-4">
                <path d="M1.5 8H14.5" stroke="#fff" strokeWidth="3" strokeLinecap="round" />
              </svg>
            </button>
            <button aria-label="Maximize">
              <svg viewBox="0 0 12 12" className="w-3 h-3">
                <rect x="1" y="1" width="10" height="10" stroke="#fff" strokeWidth="2" fill="none" />
              </svg>
            </button>
            <button aria-label="Close" className="ml-2">
              <svg viewBox="0 0 16 16" className="w-4 h-4">
                <path d="M2.5 2.5 13.5 13.5M13.5 2.5 2.5 13.5" stroke="#fff" strokeWidth="3" strokeLinecap="round" />
              </svg>
            </button>
          </div>
        </header>

        <nav className="h-[22px] px-1 flex items-center gap-2 bg-[#525252] border-t border-black text-[13px] text-white">
          <button>File</button>
          <button>Edit</button>
          <button>Configure</button>
          <button>View</button>
          <button>Help</button>
        </nav>

        <div className="h-8 px-1 flex items-center bg-[#454545]">
          <div className="flex gap-[22px]">
            {fileTools.map((tool) => (
              <button key={tool.label} aria-label={tool.label}>
                {tool.icon}
              </button>
            ))}
          </div>
          <div className="ml-[21px] mr-1.5 w-px h-6 bg-[#d0d0d0]"></div>
          <div className="flex gap-[22px]">
            {modelTools.map((tool) => (
              <button key={tool.label} aria-label={tool.label}>
                {tool.icon}
              </button>
            ))}
          </div>
        </div>

        <main className="flex-1 flex">
          <section className="relative flex-1 flex justify-between bg-[#828482]">
            <Scene />
            <div className="relative pt-32 flex flex-col gap-5">
              <div className="flex flex-col rounded-r-[10px] bg-[#454545]">
                {sideTools.map((tool) => (
                  <button key={tool.label} aria-label={tool.label} className="w-20 h-20 flex items-center justify-center">
                    <svg
                      viewBox="0 0 54 54"
                      className="w-[54px] h-[54px]"
                      fill="none"
                      stroke="#dedede"
                      strokeWidth="3"
                      strokeLinecap="round"
                      strokeLinejoin="round"
                    >
                      {tool.icon}
                    </svg>
                  </button>
                ))}
              </div>
              <button
                aria-label="Layers"
                className="w-20 h-20 flex items-center justify-center rounded-r-[10px] bg-[#13f0f0]"
              >
                <svg
                  viewBox="0 0 54 54"
                  className="w-[54px] h-[54px]"
                  fill="none"
                  stroke="#2c6b6b"
                  strokeWidth="2"
                  strokeLinecap="round"
                  strokeLinejoin="round"
                >
                  <path d="M8.5 2H52.5L46.5 15H2.5ZM2.5 24H46.5L52.5 12M2.5 33H46.5L52.5 21M2.5 42H46.5L52.5 30M2.5 51H46.5L52.5 39" />
                </svg>
              </button>
            </div>
            <div className="relative pt-11 pr-[35px] flex flex-col items-end gap-[62px]">
              <div className="pr-[2px]">
                <ViewCross />
              </div>
              <LayerSlider />
            </div>
          </section>

          <ModelPanel />
        </main>
      </div>
      <Taskbar />
    </div>
  );
};

export default App;
